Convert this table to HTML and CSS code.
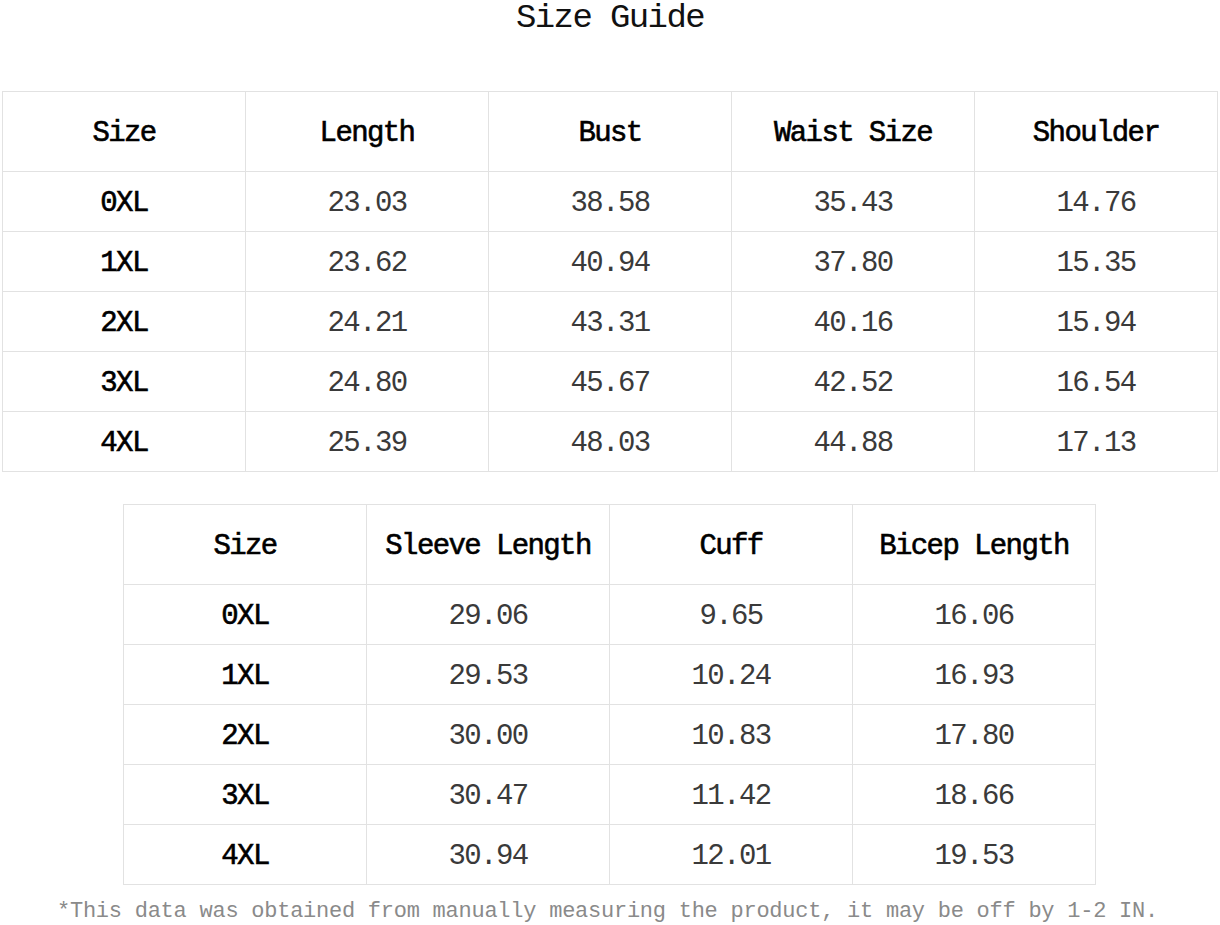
FILE: index.html
```html
<!DOCTYPE html>
<html>
<head>
<meta charset="utf-8">
<link rel="stylesheet" href="styles.css">
</head>
<body>
<div class="page">
  <h1 class="title">Size Guide</h1>
  <table class="grid grid-main">
    <tr class="head"><th>Size</th><th>Length</th><th>Bust</th><th>Waist Size</th><th>Shoulder</th></tr>
    <tr><th>0XL</th><td>23.03</td><td>38.58</td><td>35.43</td><td>14.76</td></tr>
    <tr><th>1XL</th><td>23.62</td><td>40.94</td><td>37.80</td><td>15.35</td></tr>
    <tr><th>2XL</th><td>24.21</td><td>43.31</td><td>40.16</td><td>15.94</td></tr>
    <tr><th>3XL</th><td>24.80</td><td>45.67</td><td>42.52</td><td>16.54</td></tr>
    <tr><th>4XL</th><td>25.39</td><td>48.03</td><td>44.88</td><td>17.13</td></tr>
  </table>
  <table class="grid grid-sleeve">
    <tr class="head"><th>Size</th><th>Sleeve Length</th><th>Cuff</th><th>Bicep Length</th></tr>
    <tr><th>0XL</th><td>29.06</td><td>9.65</td><td>16.06</td></tr>
    <tr><th>1XL</th><td>29.53</td><td>10.24</td><td>16.93</td></tr>
    <tr><th>2XL</th><td>30.00</td><td>10.83</td><td>17.80</td></tr>
    <tr><th>3XL</th><td>30.47</td><td>11.42</td><td>18.66</td></tr>
    <tr><th>4XL</th><td>30.94</td><td>12.01</td><td>19.53</td></tr>
  </table>
  <p class="note">*This data was obtained from manually measuring the product, it may be off by 1-2 IN.</p>
</div>
</body>
</html>
```
FILE: styles.css
```css
html, body {
  margin: 0;
  padding: 0;
  background: #ffffff;
}
.page {
  width: 1220px;
  height: 925px;
  font-family: "Liberation Mono", "DejaVu Sans Mono", monospace;
  color: #1a1a1a;
  overflow: hidden;
}
.title {
  margin: 0;
  height: 91px;
  box-sizing: border-box;
  padding-top: 0;
  text-align: center;
  font-size: 34px;
  line-height: 36px;
  font-weight: normal;
  letter-spacing: -1.6px;
  color: #111;
}
.grid {
  border-collapse: collapse;
  table-layout: fixed;
}
.grid-main {
  width: 1216px;
  margin-left: 2px;
}
.grid-sleeve {
  width: 973px;
  margin-top: 32px;
  margin-left: 123px;
}
.grid th, .grid td {
  border: 1px solid #e2e2e2;
  height: 59px;
  padding: 4px 0 0 0;
  box-sizing: border-box;
  text-align: center;
  vertical-align: middle;
  font-size: 29px;
  letter-spacing: -1.6px;
}
.grid tr {
  height: 60px;
}
.grid tr.head {
  height: 80px;
}
.grid th {
  font-weight: normal;
  color: #000;
  -webkit-text-stroke: 0.6px #000;
}
.grid td {
  font-weight: normal;
  color: #3a3a3a;
}
.note {
  margin: 14px 0 0 0;
  padding-left: 57px;
  font-size: 22px;
  line-height: 26px;
  letter-spacing: -0.25px;
  color: #8a8a8a;
}
```
